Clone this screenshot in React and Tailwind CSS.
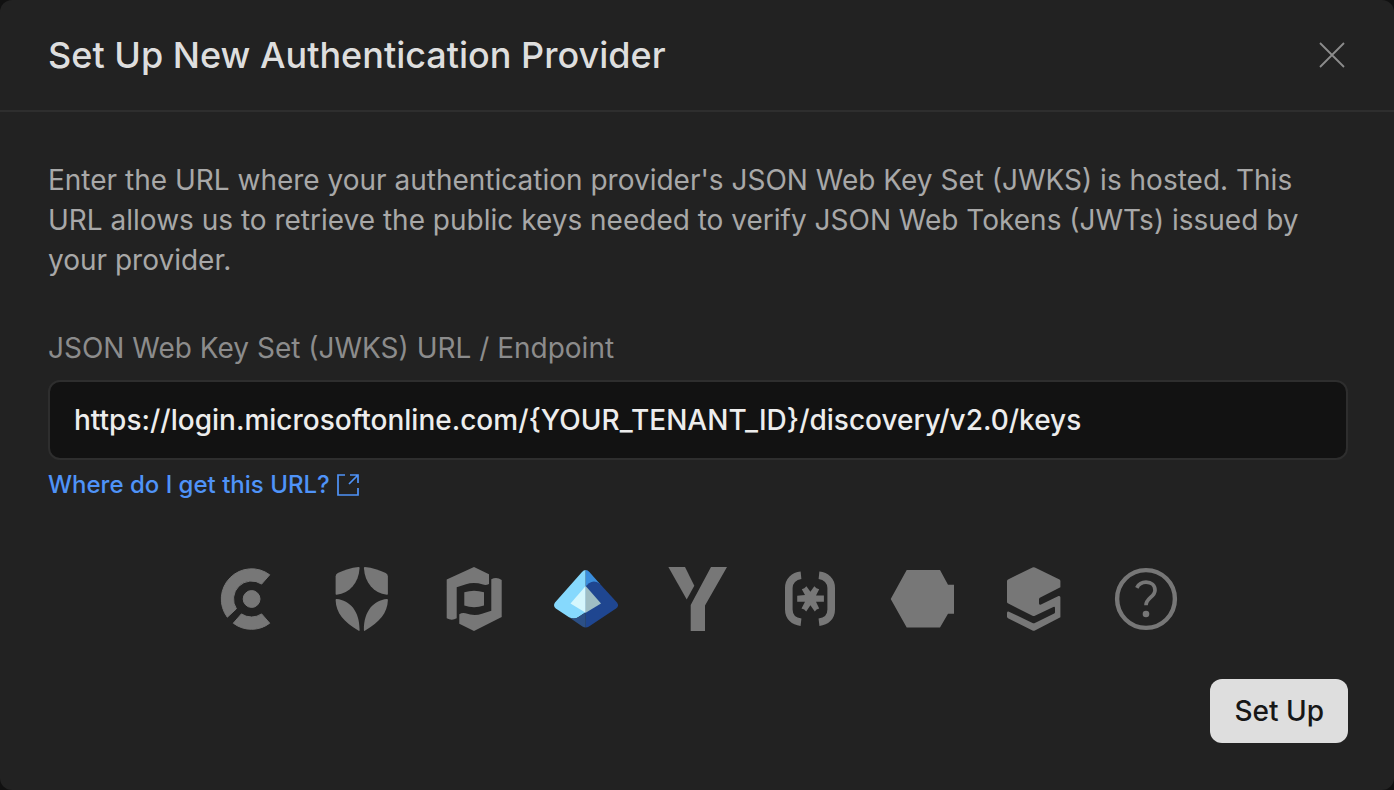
import { useState } from "react";

function ClerkIcon() {
  return (
    <svg viewBox="0 0 64 64" className="size-16" fill="currentColor" stroke="currentColor" strokeWidth="1" strokeLinejoin="round" aria-hidden="true">
      <circle cx="33.6" cy="32" r="8.4" />
      <path d="M51.7 7.8A30.3 30.3 0 0 0 9.3 50.2L18.4 41.8A18 18 0 0 1 43.6 17.1Z" />
      <path d="M15.3 56.2L23.4 46.9A18 18 0 0 0 43.6 46.9L51.7 56.2A30.3 30.3 0 0 1 15.3 56.2Z" />
    </svg>
  );
}

function Auth0Icon() {
  return (
    <svg viewBox="0 0 64 64" className="size-16" fill="currentColor" aria-hidden="true">
      <path d="M28.6 0C21 .8 14 3 7.8 6Q5.6 7.2 5.6 9.6V27Q5.6 27.9 6.6 27.8C20 26 28.6 16 29.6 1Q29.6 0 28.6 0Z" />
      <path d="M34.9 0C42.5 .8 49.5 3 55.7 6Q57.9 7.2 57.9 9.6V27Q57.9 27.9 56.9 27.8C43.5 26 34.9 16 33.9 1Q33.9 0 34.9 0Z" />
      <path d="M6.6 32.1C20 33.5 29.6 44 29.6 63Q29.6 64.4 28.3 63.6C14 55 6 46 5.6 33Q5.6 32 6.6 32.1Z" />
      <path d="M56.9 32.1C43.5 33.5 33.9 44 33.9 63Q33.9 64.4 35.2 63.6C49.5 55 57.5 46 57.9 33Q57.9 32 56.9 32.1Z" />
    </svg>
  );
}

function PropelIcon() {
  return (
    <svg viewBox="0 0 64 64" className="size-16" fill="currentColor" aria-hidden="true">
      <path d="M32 0L47 7.3V17Q44 18.5 41 17.6Q32 14.8 24 17.3L14.7 20.3V51.3Q9.7 54 4.7 51.2V12.5Z" />
      <path d="M49.3 12.3Q54.7 9.6 59.7 13V50L32 64L17.3 56.7V47.3Q20 45.2 23.5 46.2Q32 49.5 40 46.8L49.3 43.7Z" />
      <path d="M22.3 25.3Q32 22 42 25.3V38.4Q32 42 22.3 38.4Z" />
    </svg>
  );
}

function EntraIcon() {
  return (
    <svg viewBox="0 0 64 64" className="size-16" aria-hidden="true">
      <path fill="#86d9fd" d="M31.7 3Q29.6 3 28 5L1 35.5Q-1.3 39 1.8 41.5L15 50.2Q20 53 24.5 50L31.7 45.3Z" />
      <path fill="#3a8ddc" d="M31.7 3Q33.8 3 35.4 5L46 17L31.7 28Z" />
      <path fill="#1f4690" d="M31.7 19.3L35 16.2Q40 12.6 45.6 16.5L63 35.5Q65.5 39 62 41.5L35 59.5Q33.5 60.4 31.7 60.4Z" />
      <path fill="#2c5086" d="M15 50.2Q20 53 24.5 50L31.7 45.3V60.4Q29.9 60.4 28.4 59.5Z" />
      <path fill="#d5f7fd" d="M31.7 19L16.5 36.5L31.7 45.7Z" />
      <path fill="#9fbec4" d="M31.7 19L47 36.5L31.7 45.7Z" />
    </svg>
  );
}

function YIcon() {
  return (
    <svg viewBox="0 0 64 64" className="size-16" fill="currentColor" aria-hidden="true">
      <path d="M2.4 0H19L28.3 18.7L20.7 32.4Z" />
      <path d="M45 0H61L39 38.4V64H24.7V38Z" />
    </svg>
  );
}

function BracketIcon() {
  return (
    <svg viewBox="0 0 64 64" className="size-16" fill="none" stroke="currentColor" aria-hidden="true">
      <path strokeWidth="7.6" d="M23 8.3C16 9 10.8 14 10.8 21V42.5C10.8 50 16 54.5 23 55.3" />
      <path strokeWidth="7.6" d="M41 8.3C48 9 53.2 14 53.2 21V42.5C53.2 50 48 54.5 41 55.3" />
      <path fill="currentColor" stroke="none" d="M23.8 22.3Q26.6 21.6 28.4 19.2L32.4 24.8L36.3 19.2Q38.2 21.6 41.2 22.3L38 28.6H45.9V34.8H38L41.2 41.5Q38.2 42 36.8 44.6L32.4 38.2L28.2 44.6Q26.6 42 23.5 41.5L27 34.8H19.2V28.8L27 28Z" />
    </svg>
  );
}

function HexagonIcon() {
  return (
    <svg viewBox="0 0 64 64" className="size-16" fill="currentColor" aria-hidden="true">
      <path d="M.7 32L16.7 3H50L58 17.7H64V46.7H58L50 60.6H16.7Z" />
    </svg>
  );
}

function StackIcon() {
  return (
    <svg viewBox="0 0 64 64" className="size-16" fill="currentColor" aria-hidden="true">
      <path d="M30.5 .4Q31.7 -.1 32.9 .4L57.5 12.5Q58.4 13 58.4 14V20.3L37.8 30.7Q37 31.2 37 32.2V36.2Q37 38.3 39 37.4L56.5 29Q58.4 28.5 58.4 30.5V50.3L32.9 63.5Q31.7 64.1 30.5 63.5L6 51.3Q5 50.7 5 49.5V46Q5 44.3 7 44.7L30.5 56Q31.7 56.6 32.9 56L52.2 46.6Q53 46.2 53 45.2V41Q53 39.3 51.3 40L32.9 48.7Q31.7 49.3 30.5 48.7L5.8 36.3Q5 35.8 5 34.8V14Q5 13 6 12.5Z" />
    </svg>
  );
}

function OtherIcon() {
  return (
    <svg viewBox="0 0 64 64" className="size-16" fill="none" stroke="currentColor" aria-hidden="true">
      <circle cx="32" cy="32" r="28.9" strokeWidth="4.4" />
      <path strokeWidth="3.7" d="M22.8 20.8C25 16.5 28.5 15.2 32 15.2C37.5 15.2 41 18.5 41 23.2C41 30 32 31 32 38.2" />
      <circle cx="32" cy="47" r="3.3" fill="currentColor" stroke="none" />
    </svg>
  );
}

const providers = [
  { name: "Clerk", Icon: ClerkIcon },
  { name: "Auth0", Icon: Auth0Icon },
  { name: "PropelAuth", Icon: PropelIcon },
  { name: "Microsoft Entra", Icon: EntraIcon },
  { name: "Keycloak", Icon: YIcon },
  { name: "Descope", Icon: BracketIcon },
  { name: "WorkOS", Icon: HexagonIcon },
  { name: "Stack Auth", Icon: StackIcon },
  { name: "Other provider", Icon: OtherIcon },
];

export default function App() {
  const [url, setUrl] = useState("https://login.microsoftonline.com/{YOUR_TENANT_ID}/discovery/v2.0/keys");

  return (
    <div className="min-h-screen bg-[#111111] font-['Inter',sans-serif]">
      <main className="flex min-h-screen flex-col rounded-xl bg-[#222222]">
        <header className="flex items-center justify-between border-b-2 border-[#2e2e2e] py-8 pr-[46px] pl-12">
          <h1 className="text-4xl/[46px] font-medium text-[#dedede]">Set Up New Authentication Provider</h1>
          <button type="button" aria-label="Close" className="text-[#8c8c8c]">
            <svg viewBox="0 0 32 32" className="size-8" fill="none" stroke="currentColor" strokeWidth="1.8" aria-hidden="true">
              <path d="M4 4L28 28M28 4L4 28" />
            </svg>
          </button>
        </header>

        <form className="flex flex-col pt-12 pr-[46px] pb-11 pl-12" onSubmit={(e) => e.preventDefault()}>
          <p className="text-[28px]/10 text-[#a8a8a8]">
            Enter the URL where your authentication provider's JSON Web Key Set (JWKS) is hosted. This URL allows us to retrieve the public keys needed to verify JSON Web Tokens (JWTs) issued by your provider.
          </p>

          <label htmlFor="jwks-url" className="mt-12 text-[28px]/10 text-[#8c8c8c]">
            JSON Web Key Set (JWKS) URL / Endpoint
          </label>
          <input
            id="jwks-url"
            type="text"
            value={url}
            onChange={(e) => setUrl(e.target.value)}
            className="mt-3 h-20 w-full rounded-xl border-2 border-[#2e2e2e] bg-[#121212] px-6 text-[28px] font-medium text-[#ededed] outline-none"
          />
          <a href="#jwks-help" className="mt-[9px] flex items-center gap-1.5 self-start text-2xl/8 font-medium text-[#4f93f8]">
            Where do I get this URL?
            <svg viewBox="0 0 24 24" className="size-6" fill="none" stroke="currentColor" strokeWidth="1.7" aria-hidden="true">
              <path d="M9 2H2V22H22V15M14 2H22V10M22 2L13 11" />
            </svg>
          </a>

          <div className="mt-[66px] flex items-center justify-center gap-12">
            {providers.map(({ name, Icon }) => (
              <button key={name} type="button" aria-label={name} className="text-[#777777]">
                <Icon />
              </button>
            ))}
          </div>

          <button type="submit" className="mt-12 h-16 self-end rounded-xl bg-[#dedede] px-6 text-[28px] font-medium text-[#171717]">
            Set Up
          </button>
        </form>
      </main>
    </div>
  );
}
